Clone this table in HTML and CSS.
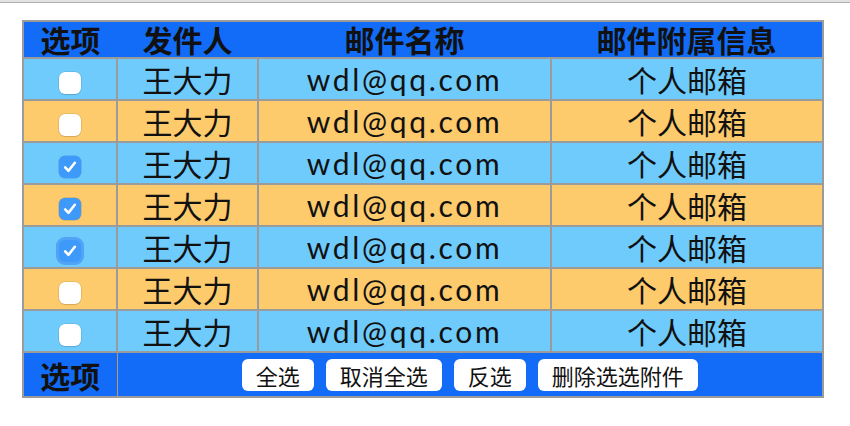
FILE: index.html
```html
<!DOCTYPE html>
<html lang="zh">
<head>
<meta charset="utf-8">
<link rel="stylesheet" href="styles.css">
</head>
<body>
<div class="topbar"></div>
<table class="mail">
  <colgroup>
    <col class="c1"><col class="c2"><col class="c3"><col class="c4">
  </colgroup>
  <thead>
    <tr class="head">
      <th>选项</th><th>发件人</th><th>邮件名称</th><th>邮件附属信息</th>
    </tr>
  </thead>
  <tbody>
    <tr class="blue"><td><span class="cb"></span></td><td>王大力</td><td class="mail-addr">wdl@qq.com</td><td>个人邮箱</td></tr>
    <tr class="orange"><td><span class="cb"></span></td><td>王大力</td><td class="mail-addr">wdl@qq.com</td><td>个人邮箱</td></tr>
    <tr class="blue"><td><span class="cb on"><svg viewBox="0 0 20 20"><path d="M5.6 10.4 L8.6 13.5 L14.4 6.2"/></svg></span></td><td>王大力</td><td class="mail-addr">wdl@qq.com</td><td>个人邮箱</td></tr>
    <tr class="orange"><td><span class="cb on"><svg viewBox="0 0 20 20"><path d="M5.6 10.4 L8.6 13.5 L14.4 6.2"/></svg></span></td><td>王大力</td><td class="mail-addr">wdl@qq.com</td><td>个人邮箱</td></tr>
    <tr class="blue"><td><span class="cb on focus"><svg viewBox="0 0 20 20"><path d="M5.6 10.4 L8.6 13.5 L14.4 6.2"/></svg></span></td><td>王大力</td><td class="mail-addr">wdl@qq.com</td><td>个人邮箱</td></tr>
    <tr class="orange"><td><span class="cb"></span></td><td>王大力</td><td class="mail-addr">wdl@qq.com</td><td>个人邮箱</td></tr>
    <tr class="blue"><td><span class="cb"></span></td><td>王大力</td><td class="mail-addr">wdl@qq.com</td><td>个人邮箱</td></tr>
  </tbody>
  <tfoot>
    <tr class="foot">
      <th>选项</th>
      <td colspan="3">
        <div class="btns">
          <button class="btn">全选</button>
          <button class="btn">取消全选</button>
          <button class="btn">反选</button>
          <button class="btn">删除选选附件</button>
        </div>
      </td>
    </tr>
  </tfoot>
</table>
</body>
</html>
```

FILE: styles.css
```css
html, body {
  margin: 0;
  padding: 0;
  background: #ffffff;
}
body {
  font-family: "Noto Sans CJK SC", "Noto Sans", sans-serif;
  color: #111;
}
.topbar {
  height: 2px;
  background: #e2e2e2;
  border-bottom: 1px solid #b0b0b0;
}
.mail {
  margin: 17px 0 0 22px;
  border-collapse: collapse;
  table-layout: fixed;
  width: 800px;
  border: 2px solid #9b9b9b;
}
.c1 { width: 94px; }
.c2 { width: 141px; }
.c3 { width: 293px; }
.c4 { width: 272px; }
.mail th, .mail td {
  padding: 0;
  text-align: center;
  vertical-align: middle;
  font-size: 30px;
  line-height: 36px;
}
.head th {
  background: #126cf8;
  font-weight: 700;
  height: 35px;
  line-height: 35px;
}
tbody td {
  border: 2px solid #9b9b9b;
  height: 40px;
  font-weight: 400;
}
.blue td { background: #6ecbfb; }
.orange td { background: #fdca6c; }
.mail-addr {
  font-family: "Lato", "Noto Sans", sans-serif;
  font-size: 32px;
  letter-spacing: 2.7px;
}
.cb {
  display: inline-block;
  width: 22px;
  height: 22px;
  border-radius: 6px;
  background: #ffffff;
  box-shadow: 0 0 0 0.5px rgba(0,0,0,0.15), 0 1px 1px rgba(0,0,0,0.1);
  vertical-align: middle;
  margin-top: -2px;
}
.cb svg {
  display: block;
  width: 22px;
  height: 22px;
}
.cb path {
  fill: none;
  stroke: #ffffff;
  stroke-width: 2.3;
  stroke-linecap: round;
  stroke-linejoin: round;
}
.cb.on {
  background: #3d9afb;
  box-shadow: 0 0 0 0.5px rgba(0,60,160,0.3);
}
.cb.focus {
  box-shadow: 0 0 0 3px rgba(60,130,240,0.55);
}
.foot th, .foot td {
  background: #126cf8;
  height: 43px;
}
.foot th {
  font-weight: 700;
  border-right: 1px solid #b89b6a;
}
.btns {
  display: flex;
  justify-content: center;
  align-items: center;
  gap: 12px;
}
.btn {
  font-family: "Noto Sans CJK SC", "Noto Sans", sans-serif;
  font-size: 22px;
  line-height: 32px;
  height: 32px;
  padding: 0 14px;
  border: none;
  border-radius: 6px;
  background: #ffffff;
  color: #111;
  margin: 0;
}
```
